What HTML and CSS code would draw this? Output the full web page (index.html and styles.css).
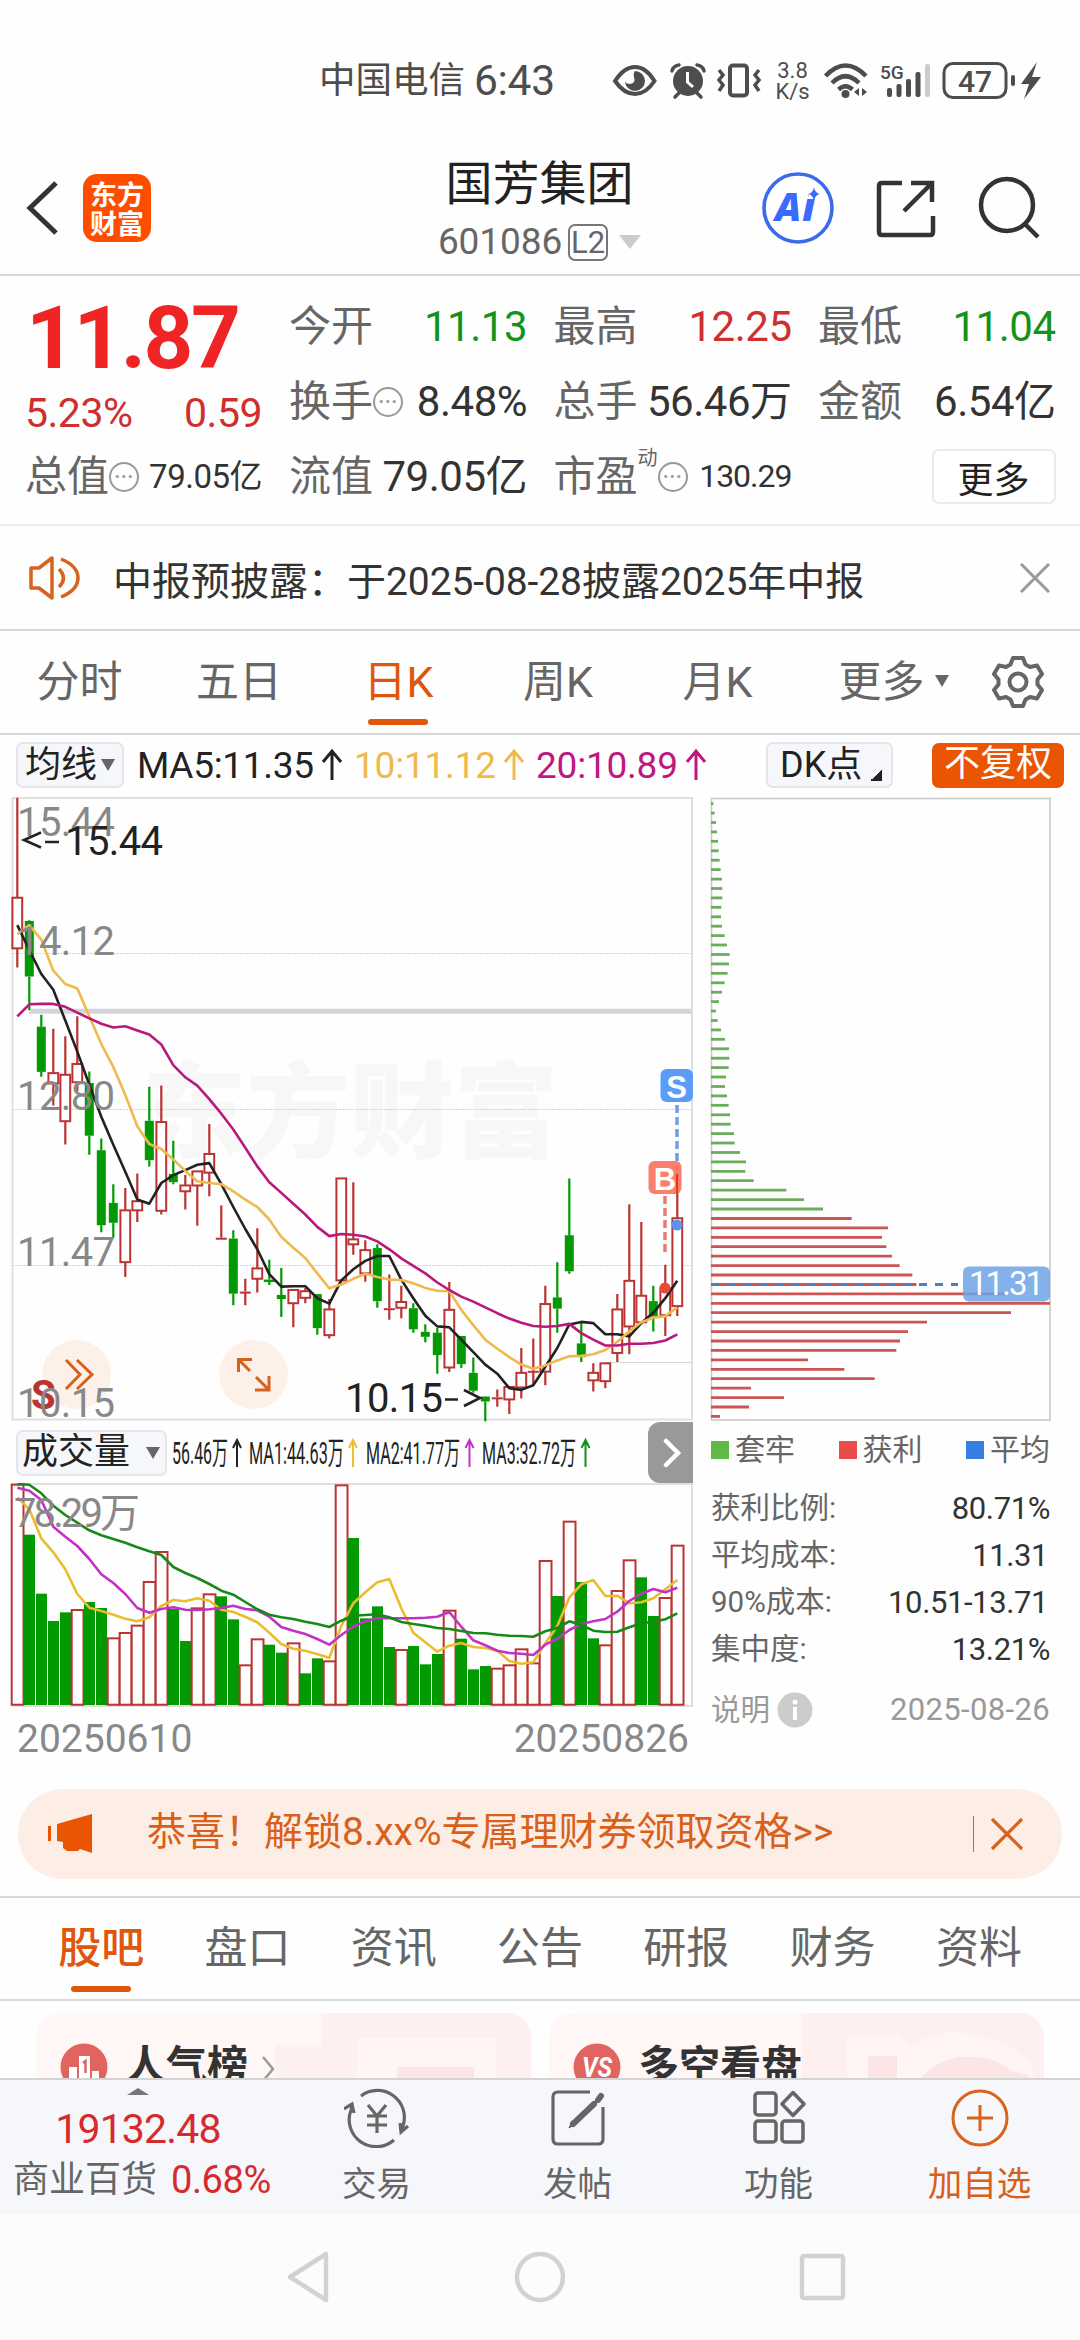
FILE: index.html
```html
<!DOCTYPE html>
<html lang="zh-CN">
<head>
<meta charset="utf-8">
<title>国芳集团 601086</title>
<link rel="stylesheet" href="styles.css">
</head>
<body>
<div class="screen">
  <div class="status">
    <span class="carrier">中国电信</span><span class="clock">6:43</span>
    <svg class="status-icons" width="440" height="50" viewBox="608 56 440 50">
      <g fill="none" stroke="#4d4d4d" stroke-width="4">
        <path d="M615 81Q624 67 635 67T654.500 81Q646 94 635 94T615 81Z"/>
      </g>
      <path d="M635 71a10 10 0 1 1-10 10q1 3 5 3q6-1 4-7q-1-4 1-6Z" fill="#4d4d4d"/>
      <circle cx="688" cy="81" r="15" fill="#4d4d4d"/>
      <path d="M672 71Q673 66 679 65M704 71Q703 66 697 65M679 93L675 97M697 93L701 97" stroke="#4d4d4d" stroke-width="3.500" fill="none" stroke-linecap="round"/>
      <path d="M687.500 72V82L693 87" stroke="#fff" stroke-width="3" fill="none"/>
      <g fill="none" stroke="#4d4d4d" stroke-width="4"><rect x="730" y="65.500" width="17" height="30" rx="3"/><path stroke-width="3.500" d="M719 70l4 5-4 5 4 5-4 6M759 70l-4 5 4 5-4 5 4 6"/></g>
      <text x="792.500" y="78" class="net" text-anchor="middle">3.8</text>
      <text x="792.500" y="99" class="net" text-anchor="middle">K/s</text>
      <g fill="none" stroke="#4d4d4d" stroke-width="4.500"><path d="M825.500 76Q845.500 55 866 76"/><path d="M832 83Q845.500 69.500 859 83"/><path d="M838.500 89.500Q845.500 83 852.500 89.500"/></g>
      <circle cx="845.500" cy="94" r="4" fill="#4d4d4d"/>
      <path d="M859 88v8l-5-4zM862 88v8l5-4z" fill="#4d4d4d"/>
      <text x="880" y="79" class="g5">5G</text>
      <g fill="#4d4d4d"><rect x="887" y="88" width="5" height="9" rx="2"/><rect x="896.500" y="84" width="5" height="13" rx="2"/><rect x="906" y="79" width="5" height="18" rx="2"/><rect x="915.500" y="72" width="5" height="25" rx="2"/></g>
      <rect x="925" y="64" width="5" height="33" rx="2" fill="#ccc"/>
      <rect x="944" y="63.500" width="62" height="34" rx="9" fill="none" stroke="#4d4d4d" stroke-width="3"/>
      <text x="975" y="92" class="bat" text-anchor="middle">47</text>
      <rect x="1011" y="75" width="4" height="11" rx="2" fill="#4d4d4d"/>
      <path d="M1037 62L1021 84H1029L1024 99L1041 77H1032Z" fill="#4d4d4d"/>
    </svg>
  </div>

  <header class="header">
    <svg class="back" width="36" height="60" viewBox="0 0 36 60"><path d="M32 5L6 30L32 55" fill="none" stroke="#333" stroke-width="5"/></svg>
    <div class="logo"><span>东方</span><span>财富</span></div>
    <div class="title">
      <div class="name">国芳集团</div>
      <div class="code"><span>601086</span><span class="l2">L2</span><i class="down"></i></div>
    </div>
    <svg class="head-icons" width="290" height="76" viewBox="770 170 290 76">
      <circle cx="809" cy="208" r="34" fill="#fff" stroke="#3a6bea" stroke-width="3.600"/>
      <text x="786" y="221" class="ai">Ai</text>
      <circle cx="825" cy="193" r="6" fill="#fff"/>
      <path d="M825 187Q826 193 831 194Q826 195 825 201Q824 195 819 194Q824 193 825 187Z" fill="#3a6bff"/>
      <g fill="none" stroke="#333" stroke-width="4.500"><path d="M913 183H893Q890 183 890 186V232Q890 235 893 235H941Q944 235 944 232V216"/><path d="M922 183H943V202M943 183L915 211"/><circle cx="1018" cy="205" r="26"/><path d="M1036 224L1049 237"/></g>
    </svg>
  </header>

  <section class="quote">
    <div class="c0 price">11.87</div>
    <div class="cell"><label>今开</label><b class="green">11.13</b></div>
    <div class="cell"><label>最高</label><b class="red">12.25</b></div>
    <div class="cell"><label>最低</label><b class="green">11.04</b></div>
    <div class="cell change"><b class="red">5.23%</b><b class="red">0.59</b></div>
    <div class="cell"><label>换手<i class="dots">···</i></label><b>8.48%</b></div>
    <div class="cell"><label>总手</label><b>56.46万</b></div>
    <div class="cell"><label>金额</label><b>6.54亿</b></div>
    <div class="cell"><label>总值<i class="dots">···</i></label><b class="sm">79.05亿</b></div>
    <div class="cell"><label>流值</label><b>79.05亿</b></div>
    <div class="cell"><label>市盈<sup>动</sup><i class="dots">···</i></label><b class="pe">130.29</b></div>
    <div class="cell end"><button class="more">更多</button></div>
  </section>

  <section class="notice">
    <svg width="54" height="48" viewBox="0 0 54 48"><g fill="none" stroke="#d8631d" stroke-width="3.500"><path d="M3 14H11L24 4V44L11 34H3Z" stroke-linejoin="round"/><path d="M31 15Q40 24 31 33M33 5Q50 12 50 24T33 43"/></g></svg>
    <p>中报预披露：于<span>2025-08-28</span>披露<span>2025</span>年中报</p>
    <svg width="30" height="30" viewBox="0 0 30 30"><path d="M1 1L29 29M29 1L1 29" stroke="#999" stroke-width="3"/></svg>
  </section>

  <nav class="periods">
    <span>分时</span><span>五日</span><span class="on">日K</span><span>周K</span><span>月K</span><span>更多<i></i></span>
    <svg width="54" height="54" viewBox="-27 -27 54 54"><g fill="none" stroke="#666" stroke-width="4" stroke-linejoin="round"><path d="M-5 -24H5L7.500 -17.500L12 -15L19 -16.500L24 -8L19.500 -2.500V2.500L24 8L19 16.500L12 15L7.500 17.500L5 24H-5L-7.500 17.500L-12 15L-19 16.500L-24 8L-19.500 2.500V-2.500L-24 -8L-19 -16.500L-12 -15L-7.500 -17.500Z"/><circle r="8.500"/></g></svg>
  </nav>

  <div class="ma">
    <span class="chip">均线<i></i></span>
    <svg width="575" height="46" viewBox="135 743 575 46">
      <g class="matext"><text x="137" y="779" textLength="177">MA5:11.35</text><text x="354" y="779" textLength="142" fill="#efb94d">10:11.12</text><text x="536" y="779" textLength="142" fill="#c0187f">20:10.89</text></g>
      <g fill="none" stroke-width="3"><path stroke="#222" d="M332 781V752M323 763L332 752L341 763"/><path stroke="#efb94d" d="M514 781V752M505 763L514 752L523 763"/><path stroke="#c0187f" d="M696 781V752M687 763L696 752L705 763"/></g>
    </svg>
    <span class="chip dk">DK点<i></i></span>
    <span class="adj">不复权</span>
  </div>

  <section class="charts">
    <div class="left">
      <svg id="kline" width="702" height="627" viewBox="0 795 702 627"></svg>
      <div class="volbar">
        <span class="chip">成交量<i></i></span>
        <svg width="430" height="44" viewBox="170 1430 430 44">
          <g class="vtext" lengthAdjust="spacingAndGlyphs">
            <text x="172" y="1463" textLength="56" lengthAdjust="spacingAndGlyphs">56.46万</text>
            <text x="249" y="1463" textLength="95" lengthAdjust="spacingAndGlyphs" fill="#eac032">MA1:44.63万</text>
            <text x="366" y="1463" textLength="94" lengthAdjust="spacingAndGlyphs" fill="#c033c6">MA2:41.77万</text>
            <text x="482" y="1463" textLength="94" lengthAdjust="spacingAndGlyphs" fill="#159015">MA3:32.72万</text>
          </g>
          <g fill="none" stroke-width="2"><path stroke="#222" d="M237 1466V1439M233 1447L237 1439L241 1447"/><path stroke="#eac032" d="M353 1466V1439M349 1447L353 1439L357 1447"/><path stroke="#c033c6" d="M469.500 1466V1439M465.500 1447L469.500 1439L473.500 1447"/><path stroke="#159015" d="M585.500 1466V1439M581.500 1447L585.500 1439L589.500 1447"/></g>
        </svg>
        <span class="next"><svg width="20" height="32" viewBox="0 0 20 32"><path d="M3 4L15 16L3 28" fill="none" stroke="#fff" stroke-width="4.500" stroke-linecap="round"/></svg></span>
      </div>
      <svg id="volume" width="702" height="226" viewBox="0 1483 702 226"></svg>
      <div class="dates"><span>20250610</span><span>20250826</span></div>
    </div>
    <div class="right">
      <svg id="chips" width="345" height="627" viewBox="708 795 345 627"></svg>
      <div class="legend"><span><i class="g"></i>套牢</span><span><i class="r"></i>获利</span><span><i class="b"></i>平均</span></div>
      <dl>
        <div><dt>获利比例:</dt><dd>80.71%</dd></div>
        <div><dt>平均成本:</dt><dd class="n">11.31</dd></div>
        <div><dt>90%成本:</dt><dd class="n">10.51-13.71</dd></div>
        <div><dt>集中度:</dt><dd>13.21%</dd></div>
      </dl>
      <div class="explain"><span>说明</span><svg width="36" height="36" viewBox="0 0 36 36"><circle cx="18" cy="18" r="17.500" fill="#ccc"/><circle cx="18" cy="10" r="2.500" fill="#fff"/><path d="M18 15V28" stroke="#fff" stroke-width="4"/></svg><span class="day">2025-08-26</span></div>
    </div>
  </section>

  <div class="banner">
    <svg width="48" height="42" viewBox="0 0 48 42"><g fill="#ea5504"><rect x="1" y="13" width="3" height="15"/><path d="M10 11L45 1V40L33 36L31 38H20L16 35V29L10 28Z"/></g></svg>
    <p>恭喜！解锁<span>8.xx%</span>专属理财券领取资格<span>&gt;&gt;</span></p>
    <i></i>
    <svg width="34" height="34" viewBox="0 0 34 34"><path d="M2 2L32 32M32 2L2 32" stroke="#d8631d" stroke-width="3.200"/></svg>
  </div>

  <nav class="sections"><span class="on">股吧</span><span>盘口</span><span>资讯</span><span>公告</span><span>研报</span><span>财务</span><span>资料</span></nav>

  <div class="cards">
    <div class="card">
      <svg class="deco" width="499" height="100" viewBox="0 0 499 100"><path d="M290 0H499V100H243V32H290Z" fill="#fdf0ef"/><path d="M325 25H464V100H325Z" fill="#fef5f4"/><path d="M365 54H442V100H365Z" fill="#fce6e5"/></svg>
      <svg class="badge" width="48" height="48" viewBox="0 0 48 48"><circle cx="24" cy="24" r="23.500" fill="#e06460"/><path d="M9 45V24H17V45M19 45V13H30V45M32 45V28H39V45" fill="#fff"/><path d="M23 20L25.500 18V30" stroke="#e06460" stroke-width="2.500" fill="none"/></svg>
      <b>人气榜</b>
      <svg class="chev" width="15" height="28" viewBox="0 0 15 28"><path d="M2 2L12 14L2 26" fill="none" stroke="#999" stroke-width="2.500"/></svg>
    </div>
    <div class="card">
      <svg class="deco" width="499" height="100" viewBox="0 0 499 100"><path d="M257 0H499V100H257Z" fill="#fdf0ef"/><path d="M302 22H352L366 32Q400 12 440 24T490 60L484 100H302Z" fill="#fef5f4"/><path d="M323 43H352V100H323ZM366 100Q366 54 414 44Q450 42 466 58L484 62L478 78L440 72V100Z" fill="#fce6e5"/></svg>
      <svg class="badge" width="48" height="48" viewBox="0 0 48 48"><circle cx="24" cy="24" r="23.500" fill="#e06460"/><text x="24" y="34" class="vs" text-anchor="middle" textLength="30" lengthAdjust="spacingAndGlyphs">VS</text></svg>
      <b>多空看盘</b>
    </div>
  </div>

  <footer class="bottom">
    <div class="index"><i></i><b>19132.48</b><div><span>商业百货</span><em>0.68%</em></div></div>
    <div class="act"><svg width="66" height="60" viewBox="-33 -30 66 60"><g fill="none" stroke="#666" stroke-width="3.200"><path d="M-16 -22A27 27 0 0 1 26 8L25 13M31 8L24 14L23 5"/><path d="M17 22A27 27 0 0 1 -26 -8L-25 -13M-33 -9L-25 -14L-23 -5"/><path d="M-9 -13L0 -2L9 -13M0 -2V15M-10 -2H10M-10 7H10"/></g></svg><span>交易</span></div>
    <div class="act"><svg width="66" height="60" viewBox="-33 -30 66 60"><g fill="none" stroke="#666"><path stroke-width="3.200" d="M12 -26H-20Q-25 -26 -25 -21V21Q-25 26 -20 26H20Q25 26 25 21V-11"/><path stroke-width="6" stroke-linecap="round" d="M23 -22L20 -18M16 -14L-5 6"/><path fill="#666" d="M-6 3L-9 10L-2 6Z"/></g></svg><span>发帖</span></div>
    <div class="act"><svg width="66" height="60" viewBox="-33 -30 66 60"><g fill="none" stroke="#666" stroke-width="3.500"><rect x="-24" y="-25" width="21" height="22" rx="3"/><path d="M14 -25.500L25 -14L14 -2.500L3 -14Z" stroke-linejoin="round"/><rect x="-24" y="3" width="21" height="21" rx="3"/><rect x="3" y="3" width="21" height="21" rx="3"/></g></svg><span>功能</span></div>
    <div class="act add"><svg width="66" height="60" viewBox="-33 -30 66 60"><g fill="none" stroke="#d8631d" stroke-width="3"><circle r="27"/><path d="M0 -13V13M-13 0H13"/></g></svg><span>加自选</span></div>
  </footer>
  <div class="sysnav">
    <svg width="44" height="54" viewBox="0 0 44 54"><path d="M40 4V50L4 27Z"/></svg>
    <svg width="54" height="54" viewBox="0 0 54 54"><circle cx="27" cy="27" r="23"/></svg>
    <svg width="54" height="54" viewBox="0 0 54 54"><rect x="6" y="6" width="41" height="42" rx="2"/></svg>
  </div>
</div>
<script src="chart.js"></script>
</body>
</html>
```
FILE: chart.js
```js
// All series share one x axis: 56 trading days, 12px apart.
const X = i => 17.3 + 12 * i;
const P = v => 780 + v / 2.412;   // price units to y
const V = v => 1420 + v / 3;      // volume units to y
const RED = '#b93432', GREEN = '#029a02';

const line = (data, y, color, w = 2.6) =>
  `<polyline fill="none" stroke="${color}" stroke-width="${w}" stroke-linejoin="round" points="${data.map((v, i) => X(i).toFixed(1) + ',' + y(v).toFixed(1)).join(' ')}"/>`;

// direction, high, body top, body bottom, low
const candles = `r43,284,406,452 g338,340,474,555 g566,595,704,716 r600,707,732,785 r618,711,823,879 r570,685,729,750 g703,731,858,904 g865,893,1074,1091
g975,1020,1068,1105 r984,1038,1163,1199 r949,1016,1038,1066 g740,822,917,932 r737,825,1039,1048 g870,950,970,975 r953,978,992,1036 r944,944,978,1075
r830,902,947,1004 r1026,1104,1106,1106 g1086,1106,1239,1267 r1203,1234,1236,1267 r1081,1178,1203,1236 g1157,1205,1211,1218 g1177,1242,1252,1295 r1230,1230,1262,1320
r1225,1233,1249,1262 g1240,1240,1322,1338 r1252,1277,1339,1347 r960,961,1207,1207 r970,1108,1120,1145 r1110,1134,1190,1210 g1120,1129,1257,1273 r1193,1274,1278,1302
r1220,1259,1273,1298 g1262,1274,1325,1333 g1313,1331,1343,1356 g1322,1333,1387,1432 r1211,1278,1417,1428 g1341,1341,1409,1418 g1393,1430,1473,1478 g1487,1487,1499,1547
r1470,1489,1491,1512 r1462,1464,1494,1529 r1370,1430,1465,1492 r1347,1425,1428,1460 r1220,1264,1427,1460 g1163,1248,1275,1333 g961,1098,1185,1191 g1310,1359,1392,1404
r1407,1430,1448,1475 r1407,1407,1450,1467 r1240,1277,1382,1404 r1023,1208,1318,1385 r1066,1244,1308,1308 g1220,1257,1294,1330 r1169,1226,1291,1341 r950,1057,1269,1293`
  .split(/\s+/).map(s => [s[0], ...s.slice(1).split(',').map(Number)]);

const ma5 = [350,410,468,506,580,655,735,812,880,945,1012,1022,972,953,941,928,924,975,1030,1083,1132,1192,1222,1221,1221,1250,1263,1207,1180,1160,1148,1148,1205,1250,1292,1318,1320,1350,1380,1410,1432,1467,1471,1460,1415,1370,1313,1307,1310,1337,1337,1342,1310,1285,1250,1208];
const ma10 = [372,350,385,460,492,503,570,637,692,760,835,878,890,915,943,968,972,975,992,1012,1030,1060,1102,1128,1153,1190,1226,1217,1203,1191,1199,1205,1206,1214,1225,1232,1233,1278,1315,1350,1372,1392,1410,1420,1412,1400,1390,1389,1385,1375,1355,1330,1308,1297,1293,1272];
const ma20 = [570,541,540,540,547,561,575,588,597,594,604,614,638,688,717,737,770,805,843,887,932,970,996,1022,1048,1078,1100,1095,1097,1101,1113,1132,1154,1172,1190,1212,1230,1246,1258,1272,1286,1299,1309,1317,1319,1317,1312,1334,1350,1364,1364,1360,1360,1358,1352,1337];

let k = `<g class="mark"><text x="142" y="1150" textLength="416">东方财富</text></g>
<rect x="12.500" y="798" width="679.500" height="621.500" fill="none" stroke="#e0e0e0" stroke-width="2"/>
<path d="M12 953.500H692M12 1109.500H692M12 1265.500H692" stroke="#d4d4d4" stroke-dasharray="2 1"/>
<path d="M605 1362.500H692" stroke="#d6d6d6"/><path d="M29 1011.300H692" stroke="#d2d6da" stroke-width="5"/>`;
candles.forEach(([d, h, t, b, l], i) => {
  const x = X(i), c = d === 'r' ? RED : GREEN;
  const top = P(t), bot = P(b), hh = bot - top;
  k += `<path d="M${x} ${P(h)}V${top}M${x} ${bot}V${P(l)}" stroke="${c}" stroke-width="2.200"/>`;
  k += d === 'r' && hh > 3
    ? `<rect x="${x - 4.9}" y="${top}" width="9.800" height="${hh}" fill="#fff" stroke="${c}" stroke-width="2"/>`
    : `<rect x="${x - (hh > 3 ? 4.5 : 5.5)}" y="${top}" width="${hh > 3 ? 9 : 11}" height="${Math.max(hh, 2)}" fill="${c}"/>`;
});
k += `<circle cx="76.500" cy="1374.500" r="34.500" fill="#fdeee6" opacity=".9"/><circle cx="253.500" cy="1374.500" r="34.500" fill="#fdeee6" opacity=".9"/>
<g fill="none" stroke="#d8601a" stroke-width="3"><path d="M66 1360L80 1374.500L66 1389M77 1360L92 1374.500L77 1389"/><path d="M250 1371L239 1360M238.500 1372V1359.500H252M256 1377L268 1389M269 1376V1390H255"/></g>
<text x="31" y="1409" class="smark">S</text>`;
k += line(ma5, P, '#222') + line(ma10, P, '#efb94d') + line(ma20, P, '#b9197b');
k += `<g class="axis"><text x="17" y="836">15.44</text><text x="17" y="954.500">14.12</text><text x="17" y="1110">12.80</text><text x="17" y="1265.500">11.47</text><text x="17" y="1417">10.15</text></g>
<g class="peak"><text x="65" y="854.500">15.44</text><text x="345" y="1412">10.15</text></g>
<g fill="none" stroke="#222" stroke-width="2.600"><path d="M41 832.500L24 840L41 847.500M45 842H59"/><path d="M445 1399.500H458M464 1390L480 1398L464 1406"/></g>
<g stroke-width="3.500"><path d="M677 1105V1161" stroke="#6b9fe8" stroke-dasharray="8 4"/><path d="M665 1196V1253" stroke="#e57d73" stroke-dasharray="8 4"/></g>
<rect x="660.500" y="1069" width="32.500" height="33" rx="6" fill="#5b9cf8"/><rect x="648.500" y="1161" width="33" height="33" rx="6" fill="#f97866" fill-opacity=".95"/>
<g class="bs"><text x="676.500" y="1098">S</text><text x="665" y="1190">B</text></g>
<path d="M677 1174V1194" stroke="#e8352c" stroke-width="2"/>
<circle cx="677" cy="1225" r="5.500" fill="#5b93f0"/><circle cx="665" cy="1288" r="5.500" fill="#e84a38"/>`;
document.getElementById('kline').innerHTML = k;

const vols = 'r194 g344 g521 g603 g577 r570 g546 g564 r655 r639 r617 r486 r396 g567 g663 r565 r523 g529 g598 r736 r658 g674 g698 r670 g760 g715 r724 r196 g354 g595 g559 g681 r690 g678 g733 g702 r572 g656 g748 g738 r746 r736 r688 r730 r423 g528 r305 g486 g655 r676 r513 r421 g472 g588 r534 r377'
  .split(' ').map(s => [s[0], +s.slice(1)]);
const v1 = [232,268,355,397,448,522,563,573,584,596,604,592,558,540,544,535,542,569,576,590,607,638,672,686,692,703,713,618,550,517,487,477,565,638,667,695,677,669,681,684,692,723,731,727,670,618,533,493,480,528,527,550,547,535,508,480];
const v2 = [203,212,240,320,350,378,417,463,489,522,564,578,567,562,569,570,568,564,557,567,571,590,621,632,642,657,674,645,620,604,595,595,595,595,593,590,576,620,661,676,692,699,701,705,674,656,630,612,604,597,575,543,521,507,517,503];
const v3 = [192,194,220,257,285,308,331,346,357,368,382,394,405,441,459,474,492,512,524,546,568,584,592,597,605,612,621,602,587,585,583,592,606,612,617,624,627,633,639,640,644,647,648,650,634,624,604,615,632,636,635,622,610,605,598,580];
let s = '<path d="M12.500 1706V1484H692V1706Z" fill="none" stroke="#e0e0e0" stroke-width="2"/>';
vols.forEach(([d, t], i) => {
  const x = X(i), y = V(t);
  s += d === 'r'
    ? `<rect x="${x - 5.6}" y="${y}" width="11.800" height="${1704.7 - y}" fill="#fff" stroke="${RED}" stroke-width="2"/>`
    : `<rect x="${x - 5.3}" y="${y}" width="11" height="${1705 - y}" fill="${GREEN}"/>`;
});
s += line(v1, V, '#e9bd2e') + line(v2, V, '#c033c6') + line(v3, V, '#168a16') + '<text class="vmax" x="14" y="1527" textLength="126">78.29万</text>';
document.getElementById('volume').innerHTML = s;

// Cost distribution, one bar per price level, top to bottom
const dist = [70,74,78,81,84,86,89,92,96,97,97,94,93,96,104,111,119,117,113,104,96,87,78,83,93,105,117,118,116,108,105,111,116,120,122,132,134,150,168,166,191,289,342,399,485,594,576,589,606,629,667,679,957,1080,963,711,654,630,619,354,463,554,183,282,177,90];
let c = '<rect x="711.500" y="798.500" width="338.500" height="621.500" fill="none" stroke="#c9c9c9" stroke-width="1.600"/>';
dist.forEach((e, i) => {
  const y = (P(57 + i * 22.74)).toFixed(1);
  c += `<path d="M711 ${y}H${690 + e / 3}" stroke="${i < 44 ? '#6bad5a' : '#cb5553'}" stroke-width="2.800"/>`;
});
c += `<path d="M711 1284.600H958" stroke="#4a80c8" stroke-width="3" stroke-dasharray="8 8"/>
<rect x="963" y="1266.500" width="87" height="35" rx="6" fill="#6fa3e6" fill-opacity=".85"/><text class="avg" x="969" y="1295" textLength="75">11.31</text>`;
document.getElementById('chips').innerHTML = c;
```
FILE: styles.css
```css
* { box-sizing: border-box; }
body { margin: 0; background: #fff; }
.screen { width: 1080px; height: 2340px; overflow: hidden; display: flex; flex-direction: column; font-family: Roboto, "Noto Sans CJK SC", sans-serif; color: #333; background: #fefefe; }
.screen > * { flex: none; }
i, em { font-style: normal; }
svg { display: block; flex: none; }
p, dl, dd { margin: 0; }

.status { height: 120px; display: flex; align-items: center; padding: 42px 0 0 319px; height: 120px; color: #4d4d4d; line-height: 78px; }
.carrier { font-size: 36.500px; width: 155px; }
.clock { font-size: 42.500px; width: 134px; letter-spacing: -.3px; font-weight: 500; font-weight: 400; }
.status-icons { margin-top: 0; }
.net { font-size: 22px; fill: #4d4d4d; }
.g5 { font-size: 19px; font-weight: 500; fill: #4d4d4d; }
.bat { font-size: 30px; font-weight: 500; fill: #4d4d4d; }

.header { height: 156px; border-bottom: 2px solid #d6d6d6; display: flex; padding-left: 24px; }
.back { margin: 58px 23px 0 0; }
.logo { width: 68px; height: 68px; margin-top: 54px; border-radius: 14px; background: #ff4d00; color: #fff; font: 700 27px/27px "Noto Sans CJK SC", sans-serif; display: flex; flex-direction: column; align-items: center; justify-content: center; gap: 2px; }
.title { width: 380px; margin-left: 199px; display: flex; flex-direction: column; align-items: center; padding-top: 29px; }
.name { font-size: 47px; line-height: 70px; color: #222; }
.code { display: flex; align-items: center; font-size: 37px; line-height: 46px; color: #666; letter-spacing: -.1px; }
.l2 { font-size: 31px; line-height: 33px; border: 2px solid #777; border-radius: 7px; width: 40px; text-align: center; margin-left: 6px; }
.down { border: 11.500px solid transparent; border-top: 14px solid #ccc; border-bottom: 0; margin-left: 11px; }
.title { width: 389px; margin-left: 194px; }
.head-icons { margin: 50px 0 0 37px; margin-left: 25px; }
.ai { font-family: "Open Sans", sans-serif; font-weight: 800; font-style: italic; font-size: 39px; fill: #3a6bff; letter-spacing: 1px; }

.quote { height: 250px; border-bottom: 2px solid #ececec; padding: 13px 25px 0; display: grid; grid-template-columns: 237px 238px 238px 237px; column-gap: 27px; grid-template-rows: 75px 75px 75px; }
.price { color: #ee2425; font-size: 87px; font-weight: 700; line-height: 98px; letter-spacing: -2.500px; padding-left: 1px; }
.cell { display: flex; align-items: center; justify-content: space-between; height: 75px; line-height: 75px; white-space: nowrap; }
.cell label { font-size: 42px; color: #666; display: flex; align-items: center; }
.cell b { font-weight: 400; font-size: 42px; letter-spacing: -.5px; }
.cell b.red { color: #cf2f2e; }
.cell b.green { color: #12941a; }
.cell b.sm { font-size: 33px; }
.cell b.pe { font-size: 32px; letter-spacing: -1px; }
.change { padding-top: 23px; }
.change b.red { font-size: 41px; }
.quote { grid-template-columns: 238px 238px 238px 237px; column-gap: 26.500px; }
.quote > :nth-child(4n+1) { width: 237px; }
.quote { grid-template-columns: 237.500px 238px 238px 237.500px; }
.dots { width: 30px; height: 30px; border: 2.500px solid #999; border-radius: 50%; font-size: 20px; line-height: 25px; text-align: center; color: #999; font-weight: 700; letter-spacing: .5px; }
sup { font-size: 20px; line-height: 20px; align-self: flex-start; margin-top: 9px; }
.end { justify-content: flex-end; }
.more { font: 36px/52px "Noto Sans CJK SC", sans-serif; color: #222; width: 124px; height: 55px; padding: 0; border: 2px solid #e8eaec; border-radius: 7px; background: #fff; }

.notice { height: 105px; border-bottom: 2px solid #d8d8d8; display: flex; align-items: center; padding: 0 30px 0 28px; }
.notice p { font-size: 39px; margin-left: 31px; flex: 1; white-space: nowrap; }
.notice p span { letter-spacing: -.1px; }

.periods { height: 104px; border-bottom: 2px solid #d8d8d8; display: grid; grid-template-columns: 159px 160px 159px 160px 159px 193px 56px; align-items: center; justify-items: center; font-size: 43px; color: #666; line-height: 102px; }
.periods span { position: relative; white-space: nowrap; }
.periods .on, .sections .on { color: #e0560d; position: relative; }
.on::after { content: ""; position: absolute; left: calc(50% - 30px); width: 60px; height: 6px; border-radius: 3px; background: #e0560d; bottom: 8px; }
.periods i { display: inline-block; border: 7.500px solid transparent; border-top: 12px solid #666; border-bottom: 0; margin-left: 10px; vertical-align: 10px; }

.ma { height: 60px; display: flex; align-items: center; padding: 0 16px; }
.chip { height: 46px; border: 2px solid #e3e5e9; border-radius: 7px; background: #f6f7fa; font-size: 36px; line-height: 41px; color: #222; display: flex; align-items: center; padding-left: 7px; white-space: nowrap; }
.ma .chip { width: 108px; margin-right: 11px; }
.chip i { border: 7.500px solid transparent; border-top: 12px solid #666; border-bottom: 0; margin-left: 4px; }
.matext { font-size: 37px; fill: #222; }
.matext text[fill="#efb94d"] { fill: #efb94d; }
.matext text[fill="#c0187f"] { fill: #c0187f; }
.ma .dk { width: 127px; margin: 0 39px 0 56px; padding-left: 12px; }
.dk i { border: 0; width: 12px; height: 12px; background: linear-gradient(135deg, transparent 50%, #222 50%); margin: 20px 0 0 8px; }
.adj { width: 132px; height: 45px; border-radius: 7px; background: #ea5504; color: #fff; font-size: 36px; line-height: 43px; text-align: center; }

.charts { height: 994px; display: flex; }
.left { width: 702px; }
.mark { font: 900 104px "Noto Sans CJK SC", sans-serif; fill: #f7f7f7; }
.axis, .peak { font-size: 40px; fill: #888; letter-spacing: -.6px; }
.peak { fill: #222; }
.smark { font-size: 40px; font-weight: 700; fill: #b93432; }
.bs { font: 700 31px "Liberation Sans", sans-serif; fill: #fff; text-anchor: middle; }
.volbar { height: 61px; display: flex; align-items: center; padding: 0 9px 0 16px; margin-top: 0; }
.volbar .chip { width: 151px; margin-right: 3px; padding-left: 4px; }
.volbar .chip i { margin-left: 16px; }
.vtext { font-size: 32px; fill: #222; }
.vtext text[fill] { fill: attr(fill); }
.next { width: 45px; height: 61px; margin-left: auto; background: #999; border-radius: 12px 0 0 12px; display: flex; align-items: center; justify-content: center; padding-left: 5px; }
.vmax { font-size: 40px; fill: #888; }
.dates { display: flex; justify-content: space-between; padding: 0 13px 0 17px; font-size: 39px; line-height: 60px; color: #888; letter-spacing: 0; }
.right { width: 378px; padding-left: 6px; }
.avg { font-size: 33px; fill: #fff; }
.legend { display: flex; width: 339px; margin: 5px 0 0 3px; justify-content: space-between; font-size: 30px; line-height: 46px; color: #666; }
.legend span { display: flex; align-items: center; gap: 6px; }
.legend i { width: 18px; height: 18px; }
.g { background: #5eb946; } .r { background: #e84c4b; } .b { background: #3580e0; }
dl { width: 339px; margin: 12px 0 0 3px; }
dl div { display: flex; justify-content: space-between; height: 47px; line-height: 47px; font-size: 29.500px; color: #666; }
dt { white-space: nowrap; }
dd { font-size: 31px; color: #333; letter-spacing: -.4px; }
dd.n { margin-right: 2px; }
.explain { display: flex; align-items: center; width: 339px; margin: 13px 0 0 3px; font-size: 29.500px; line-height: 48px; color: #999; gap: 7px; }
.day { margin-left: auto; font-size: 31px; letter-spacing: .35px; }

.banner { height: 90px; margin: 0 18px; border-radius: 45px; background: #fceee5; display: flex; align-items: center; padding-left: 29px; color: #d8601a; font-size: 39px; }
.banner p { margin-left: 52px; white-space: nowrap; flex: 1; line-height: 86px; padding-bottom: 4px; }
.banner i { width: 1.500px; height: 36px; background: #d8601a; margin-right: 16px; }
.banner svg:last-child { margin-right: 38px; }

.sections { margin-top: 17px; height: 105px; border-top: 2px solid #d8d8d8; border-bottom: 2px solid #d8d8d8; display: grid; grid-template-columns: repeat(7, 146.300px); padding-left: 28px; justify-items: center; font-size: 43px; line-height: 101px; color: #666; }
.sections .on::after { bottom: 7px; }
.sections .on { font-weight: 500; }

.cards { height: 77px; overflow: hidden; padding: 12px 36px 0; display: flex; gap: 18px; }
.card { width: 499px; height: 130px; border-radius: 24px; background: #fef7f6; position: relative; display: flex; padding: 30px 0 0 24px; overflow: hidden; }
.deco { position: absolute; right: 0; top: 0; }
.card .badge, .card b, .chev { position: relative; }
.card b { font-size: 41px; line-height: 46px; margin-left: 17px; font-weight: 700; color: #333; }
.chev { margin: 12px 0 0 13px; }
.vs { font: italic 700 27px Roboto, sans-serif; fill: #fff; }

.bottom { height: 136px; border-top: 2px solid #d4d4d4; background: #f6f7fa; display: grid; grid-template-columns: 276px repeat(4, 201px); }
.index { display: flex; flex-direction: column; align-items: center; color: #d42b2e; }
.index i { border: 11px solid transparent; border-bottom: 7px solid #777; border-top: 0; margin-top: 8px; }
.index b { font-size: 41px; font-weight: 400; line-height: 48px; margin-top: 10px; letter-spacing: -.8px; }
.index div { display: flex; align-items: center; font-size: 36px; line-height: 46px; margin-top: 4px; gap: 14px; margin-right: -8px; }
.index span { color: #666; }
.index em { font-size: 38px; letter-spacing: -.4px; }
.act { display: flex; flex-direction: column; align-items: center; padding-top: 8px; color: #666; font-size: 34.500px; line-height: 52px; }
.act span { margin-top: 10px; }
.add { color: #d8601a; }
.sysnav { height: 126px; background: #fcfcfc; display: flex; align-items: center; padding-left: 286px; }
.sysnav svg { fill: none; stroke: #d2d2d2; stroke-width: 4.500px; stroke-linejoin: round; }
.sysnav svg:nth-child(2) { margin: 0 229px 0 183px; }
```
